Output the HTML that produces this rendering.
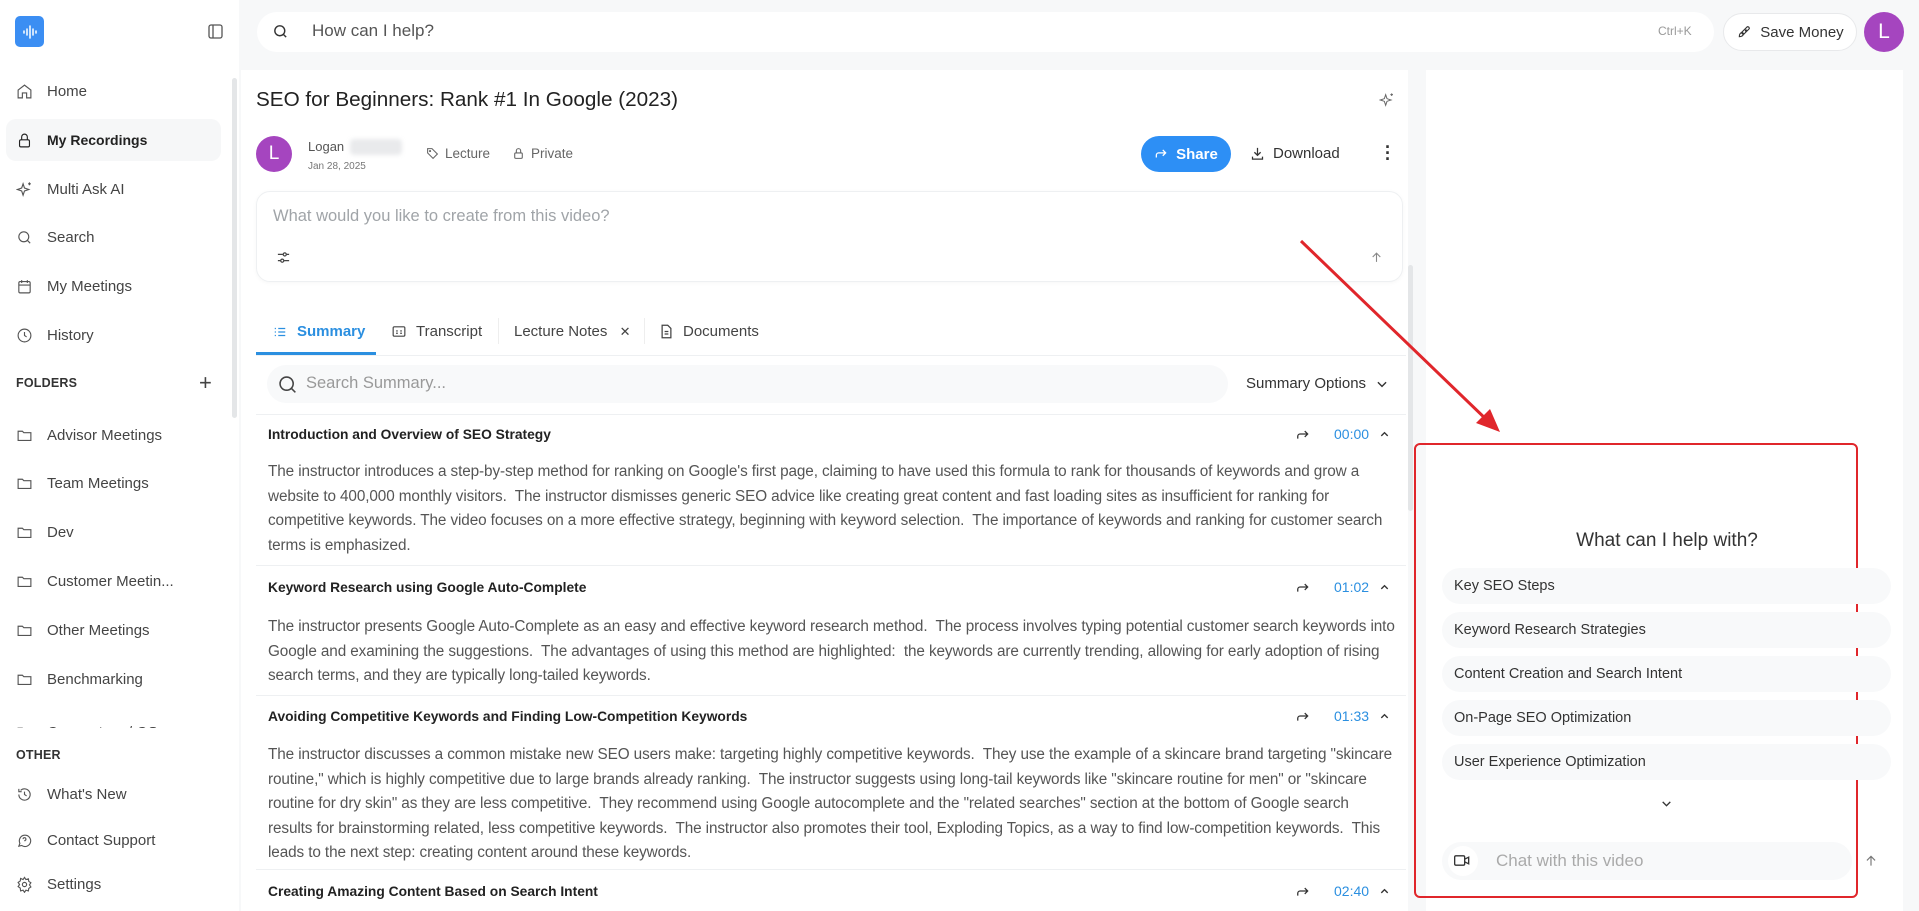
<!DOCTYPE html>
<html><head><meta charset="utf-8">
<style>
*{box-sizing:border-box;margin:0;padding:0}
body{width:1919px;height:911px;overflow:hidden;background:#f7f8f9;font-family:"Liberation Sans",sans-serif;color:#333;position:relative}
.abs{position:absolute}
svg{display:block}
.side{left:0;top:0;width:239px;height:911px;background:#fff}
.nav{position:absolute;left:16px;height:40px;display:flex;align-items:center;gap:14px;font-size:15px;color:#444;white-space:nowrap}
.nav svg{width:17px;height:17px;stroke:#555;fill:none;stroke-width:1.6}
.sec{position:absolute;left:16px;font-size:12.5px;font-weight:bold;color:#333;letter-spacing:.2px}
.main{left:241px;top:70px;width:1167px;height:841px;background:#fff}
.h{position:absolute;left:268px;font-size:13.8px;font-weight:bold;color:#222;white-space:nowrap}
.p{position:absolute;left:268px;font-size:15.3px;color:#555;line-height:24.5px;white-space:nowrap;letter-spacing:-.1px}
.sep{position:absolute;left:256px;width:1150px;height:1px;background:#eef0f2}
.ts{position:absolute;left:1296px;font-size:14px;color:#2b8fe0;display:flex;align-items:center}
.pill{position:absolute;left:1442px;width:449px;height:36px;background:#f8f9fa;border-radius:18px;font-size:14.5px;color:#333;padding-left:12px;display:flex;align-items:center}
</style></head><body>
<!-- sidebar -->
<div class="abs side">
  <div class="abs" style="left:15px;top:16px;width:29px;height:31px;background:#3b8ef3;border-radius:5px;display:flex;align-items:center;justify-content:center">
    <svg width="16" height="14" viewBox="0 0 16 14" stroke="#fff" stroke-width="1.5" stroke-linecap="round"><path d="M2 6v2M5 4v6M8 1v12M11 4v6M14 6v2"/></svg>
  </div>
  <svg class="abs" style="left:208px;top:24px" width="15" height="15" viewBox="0 0 15 15" fill="none" stroke="#555" stroke-width="1.3"><rect x="1" y="1" width="13" height="13" rx="2"/><path d="M5 1v13"/></svg>
  <div class="abs" style="left:6px;top:119px;width:215px;height:42px;background:#f6f7f8;border-radius:10px"></div>
  <div class="nav" style="top:71px"><svg viewBox="0 0 24 24"><path d="M3 10l9-7 9 7v11h-6v-7H9v7H3z"/></svg>Home</div>
  <div class="nav" style="top:120px;font-weight:bold;color:#222;font-size:14px"><svg viewBox="0 0 24 24" style="stroke:#222"><rect x="5" y="11" width="14" height="10" rx="2"/><path d="M8 11V7a4 4 0 0 1 8 0v4"/></svg>My Recordings</div>
  <div class="nav" style="top:169px"><svg viewBox="0 0 24 24"><path d="M10 4l2 6 6 2-6 2-2 6-2-6-6-2 6-2zM19 2v4M17 4h4"/></svg>Multi Ask AI</div>
  <div class="nav" style="top:217px"><svg viewBox="0 0 24 24"><circle cx="11" cy="11" r="7"/><path d="M20 20l-4-4"/></svg>Search</div>
  <div class="nav" style="top:266px"><svg viewBox="0 0 24 24"><rect x="4" y="5" width="16" height="16" rx="2"/><path d="M4 10h16M8 3v4M16 3v4"/></svg>My Meetings</div>
  <div class="nav" style="top:315px"><svg viewBox="0 0 24 24"><circle cx="12" cy="12" r="9"/><path d="M12 7v5l3 2"/></svg>History</div>
  <div class="sec" style="top:376px">FOLDERS</div>
  <div class="abs" style="left:199px;top:370px;font-size:22px;color:#444">+</div>
  <div class="nav" style="top:415px"><svg viewBox="0 0 24 24"><path d="M3 6h6l2 2h10v11H3z"/></svg>Advisor Meetings</div>
  <div class="nav" style="top:463px"><svg viewBox="0 0 24 24"><path d="M3 6h6l2 2h10v11H3z"/></svg>Team Meetings</div>
  <div class="nav" style="top:512px"><svg viewBox="0 0 24 24"><path d="M3 6h6l2 2h10v11H3z"/></svg>Dev</div>
  <div class="nav" style="top:561px"><svg viewBox="0 0 24 24"><path d="M3 6h6l2 2h10v11H3z"/></svg>Customer Meetin...</div>
  <div class="nav" style="top:610px"><svg viewBox="0 0 24 24"><path d="M3 6h6l2 2h10v11H3z"/></svg>Other Meetings</div>
  <div class="nav" style="top:659px"><svg viewBox="0 0 24 24"><path d="M3 6h6l2 2h10v11H3z"/></svg>Benchmarking</div>
  <div class="abs" style="left:0;top:718px;width:239px;height:10px;overflow:hidden"><div class="nav" style="top:-6px"><svg viewBox="0 0 24 24"><path d="M3 6h6l2 2h10v11H3z"/></svg>Connectors / OS</div></div>
  <div class="abs" style="left:232px;top:78px;width:5px;height:340px;background:#e4e6e8;border-radius:3px"></div>
  <div class="sec" style="top:748px">OTHER</div>
  <div class="nav" style="top:774px"><svg viewBox="0 0 24 24"><path d="M4 12a8 8 0 1 0 2.5-5.8M4 4v4h4M12 8v4l3 2"/></svg>What's New</div>
  <div class="nav" style="top:820px"><svg viewBox="0 0 24 24"><path d="M4 20l1.5-4A8 8 0 1 1 8 19z"/><path d="M10 10a2 2 0 1 1 2.5 2v1M12 16v.1"/></svg>Contact Support</div>
  <div class="nav" style="top:864px"><svg viewBox="0 0 24 24"><circle cx="12" cy="12" r="3"/><path d="M12 2l2 3 3.5-1 .5 3.5 3 2-2 3 2 3-3 2-.5 3.5-3.5-1-2 3-2-3-3.5 1L6 17l-3-2 2-3-2-3 3-2 .5-3.5L10 5z"/></svg>Settings</div>
</div>

<!-- top bar -->
<div class="abs" style="left:257px;top:12px;width:1457px;height:40px;background:#fff;border-radius:20px"></div>
<svg class="abs" style="left:272px;top:23px" width="17" height="17" viewBox="0 0 24 24" fill="none" stroke="#333" stroke-width="2"><circle cx="11" cy="11" r="7"/><path d="M20 20l-4-4"/></svg>
<div class="abs" style="left:312px;top:21px;font-size:17px;color:#555">How can I help?</div>
<div class="abs" style="left:1658px;top:24px;font-size:12px;color:#999">Ctrl+K</div>
<div class="abs" style="left:1723px;top:13px;width:134px;height:38px;background:#fff;border:1px solid #e8e9eb;border-radius:19px;display:flex;align-items:center;justify-content:center;gap:8px;font-size:15px;color:#333">
<svg width="16" height="16" viewBox="0 0 24 24" fill="none" stroke="#333" stroke-width="1.7"><path d="M5 19c0-3 1-5 3-6l3 3c-1 2-3 3-6 3zM9 12l8-8c2 0 3 1 3 3l-8 8zM15 9a1 1 0 1 0 .1 0"/></svg>Save Money</div>
<div class="abs" style="left:1864px;top:12px;width:40px;height:40px;border-radius:50%;background:#a545bf;color:#fff;font-size:21px;display:flex;align-items:center;justify-content:center">L</div>

<!-- main -->
<div class="abs main"></div>
<div class="abs" style="left:1410px;top:70px;width:5px;height:841px;background:#f7f8f9"></div>
<div class="abs" style="left:1408px;top:265px;width:5px;height:246px;background:#e4e6e8;border-radius:3px"></div>
<div class="abs" style="left:256px;top:88px;font-size:20.7px;color:#222">SEO for Beginners: Rank #1 In Google (2023)</div>
<svg class="abs" style="left:1379px;top:92px" width="16" height="16" viewBox="0 0 24 24" fill="none" stroke="#666" stroke-width="1.5"><path d="M10 4l2 6 6 2-6 2-2 6-2-6-6-2 6-2zM19 2v4M17 4h4"/></svg>
<div class="abs" style="left:256px;top:136px;width:36px;height:36px;border-radius:50%;background:#a545bf;color:#fff;font-size:19px;display:flex;align-items:center;justify-content:center">L</div>
<div class="abs" style="left:308px;top:139px;font-size:13px;color:#555">Logan</div>
<div class="abs" style="left:350px;top:139px;width:52px;height:16px;background:#e9eaec;border-radius:4px;filter:blur(2px)"></div>
<div class="abs" style="left:308px;top:161px;font-size:10px;color:#777">Jan 28, 2025</div>
<div class="abs" style="left:426px;top:146px;font-size:13.5px;color:#666;display:flex;gap:6px;align-items:center"><svg width="13" height="13" viewBox="0 0 24 24" fill="none" stroke="#666" stroke-width="2"><path d="M3 3h8l10 10-8 8L3 11z"/><circle cx="7.5" cy="7.5" r="1"/></svg>Lecture</div>
<div class="abs" style="left:512px;top:146px;font-size:13.5px;color:#666;display:flex;gap:6px;align-items:center"><svg width="13" height="13" viewBox="0 0 24 24" fill="none" stroke="#666" stroke-width="2"><rect x="5" y="11" width="14" height="10" rx="2"/><path d="M8 11V7a4 4 0 0 1 8 0v4"/></svg>Private</div>
<div class="abs" style="left:1141px;top:136px;width:90px;height:36px;background:#2d8ff5;border-radius:18px;color:#fff;font-size:15px;font-weight:bold;display:flex;align-items:center;justify-content:center;gap:8px"><svg width="14" height="14" viewBox="0 0 24 24" fill="none" stroke="#fff" stroke-width="2.2"><path d="M4 18v-4a4 4 0 0 1 4-4h12M15 5l5 5-5 5"/></svg>Share</div>
<div class="abs" style="left:1250px;top:145px;font-size:15px;color:#333;display:flex;align-items:center;gap:8px"><svg width="15" height="15" viewBox="0 0 24 24" fill="none" stroke="#333" stroke-width="2"><path d="M12 3v12M7 10l5 5 5-5M4 17v4h16v-4"/></svg>Download</div>
<div class="abs" style="left:1385px;top:144px;width:4px;font-size:18px;color:#333;line-height:6px;text-align:center;font-weight:bold">·<br>·<br>·</div>
<div class="abs" style="left:256px;top:191px;width:1147px;height:91px;border:1px solid #eef0f2;border-radius:14px;box-shadow:0 1px 4px rgba(0,0,0,.04)"></div>
<div class="abs" style="left:273px;top:207px;font-size:16.5px;color:#a0a4a8">What would you like to create from this video?</div>
<svg class="abs" style="left:276px;top:250px" width="15" height="15" viewBox="0 0 24 24" fill="none" stroke="#444" stroke-width="2"><path d="M3 7h8M17 7h4M3 17h4M13 17h8"/><circle cx="14" cy="7" r="2.5"/><circle cx="10" cy="17" r="2.5"/></svg>
<svg class="abs" style="left:1370px;top:251px" width="13" height="13" viewBox="0 0 24 24" fill="none" stroke="#888" stroke-width="2"><path d="M12 20V4M5 11l7-7 7 7"/></svg>

<!-- tabs -->
<div class="abs" style="left:273px;top:323px;font-size:15px;color:#2b8fe0;font-weight:bold;display:flex;gap:10px;align-items:center"><svg width="14" height="14" viewBox="0 0 24 24" fill="none" stroke="#2b8fe0" stroke-width="2"><path d="M9 6h12M9 12h12M9 18h12M3 6h2M3 12h2M3 18h2"/></svg>Summary</div>
<div class="abs" style="left:256px;top:352px;width:120px;height:3px;background:#2b8fe0"></div>
<div class="abs" style="left:256px;top:355px;width:1150px;height:1px;background:#eef0f2"></div>
<div class="abs" style="left:392px;top:323px;font-size:15px;color:#444;display:flex;gap:10px;align-items:center"><svg width="14" height="13" viewBox="0 0 24 22" fill="none" stroke="#444" stroke-width="2"><rect x="2" y="3" width="20" height="16" rx="2"/><path d="M7 10h3M14 10h3M7 14h3M14 14h3"/></svg>Transcript</div>
<div class="abs" style="left:498px;top:318px;width:1px;height:26px;background:#eee"></div>
<div class="abs" style="left:514px;top:323px;font-size:15px;color:#444">Lecture Notes <span style="font-size:13px;margin-left:8px">✕</span></div>
<div class="abs" style="left:644px;top:318px;width:1px;height:26px;background:#eee"></div>
<div class="abs" style="left:660px;top:323px;font-size:15px;color:#444;display:flex;gap:10px;align-items:center"><svg width="13" height="15" viewBox="0 0 20 24" fill="none" stroke="#444" stroke-width="2"><path d="M3 2h9l5 5v15H3zM7 12h6M7 16h6"/></svg>Documents</div>
<div class="abs" style="left:267px;top:365px;width:961px;height:38px;background:#f8f9fa;border-radius:19px"></div>
<svg class="abs" style="left:277px;top:374px" width="21" height="21" viewBox="0 0 24 24" fill="none" stroke="#444" stroke-width="1.8"><circle cx="11" cy="11" r="7.5"/><path d="M21 21l-4.5-4.5"/></svg>
<div class="abs" style="left:306px;top:374px;font-size:16.5px;color:#999">Search Summary...</div>
<div class="abs" style="left:1246px;top:375px;font-size:15px;color:#333">Summary Options</div>
<svg class="abs" style="left:1375px;top:377px" width="14" height="14" viewBox="0 0 24 24" fill="none" stroke="#333" stroke-width="2.4"><path d="M5 9l7 7 7-7"/></svg>
<div class="sep" style="top:414px"></div>

<!-- sections -->
<div class="h" style="top:427px">Introduction and Overview of SEO Strategy</div>
<div class="ts" style="top:426px"><svg width="14" height="12" viewBox="0 0 24 20" fill="none" stroke="#333" stroke-width="2.2"><path d="M3 18v-4a4 4 0 0 1 4-4h13M15 5l5 5-5 5"/></svg><span style="margin-left:24px">00:00</span><svg style="margin-left:10px" width="11" height="11" viewBox="0 0 24 24" fill="none" stroke="#333" stroke-width="3"><path d="M5 15l7-7 7 7"/></svg></div>
<div class="p" style="top:460px">The instructor introduces a step-by-step method for ranking on Google's first page, claiming to have used this formula to rank for thousands of keywords and grow a<br>website to 400,000 monthly visitors.&nbsp; The instructor dismisses generic SEO advice like creating great content and fast loading sites as insufficient for ranking for<br>competitive keywords. The video focuses on a more effective strategy, beginning with keyword selection.&nbsp; The importance of keywords and ranking for customer search<br>terms is emphasized.</div>
<div class="sep" style="top:565px"></div>
<div class="h" style="top:580px">Keyword Research using Google Auto-Complete</div>
<div class="ts" style="top:579px"><svg width="14" height="12" viewBox="0 0 24 20" fill="none" stroke="#333" stroke-width="2.2"><path d="M3 18v-4a4 4 0 0 1 4-4h13M15 5l5 5-5 5"/></svg><span style="margin-left:24px">01:02</span><svg style="margin-left:10px" width="11" height="11" viewBox="0 0 24 24" fill="none" stroke="#333" stroke-width="3"><path d="M5 15l7-7 7 7"/></svg></div>
<div class="p" style="top:615px">The instructor presents Google Auto-Complete as an easy and effective keyword research method.&nbsp; The process involves typing potential customer search keywords into<br>Google and examining the suggestions.&nbsp; The advantages of using this method are highlighted:&nbsp; the keywords are currently trending, allowing for early adoption of rising<br>search terms, and they are typically long-tailed keywords.</div>
<div class="sep" style="top:695px"></div>
<div class="h" style="top:709px">Avoiding Competitive Keywords and Finding Low-Competition Keywords</div>
<div class="ts" style="top:708px"><svg width="14" height="12" viewBox="0 0 24 20" fill="none" stroke="#333" stroke-width="2.2"><path d="M3 18v-4a4 4 0 0 1 4-4h13M15 5l5 5-5 5"/></svg><span style="margin-left:24px">01:33</span><svg style="margin-left:10px" width="11" height="11" viewBox="0 0 24 24" fill="none" stroke="#333" stroke-width="3"><path d="M5 15l7-7 7 7"/></svg></div>
<div class="p" style="top:743px">The instructor discusses a common mistake new SEO users make: targeting highly competitive keywords.&nbsp; They use the example of a skincare brand targeting "skincare<br>routine," which is highly competitive due to large brands already ranking.&nbsp; The instructor suggests using long-tail keywords like "skincare routine for men" or "skincare<br>routine for dry skin" as they are less competitive.&nbsp; They recommend using Google autocomplete and the "related searches" section at the bottom of Google search<br>results for brainstorming related, less competitive keywords.&nbsp; The instructor also promotes their tool, Exploding Topics, as a way to find low-competition keywords.&nbsp; This<br>leads to the next step: creating content around these keywords.</div>
<div class="sep" style="top:869px"></div>
<div class="h" style="top:884px">Creating Amazing Content Based on Search Intent</div>
<div class="ts" style="top:883px"><svg width="14" height="12" viewBox="0 0 24 20" fill="none" stroke="#333" stroke-width="2.2"><path d="M3 18v-4a4 4 0 0 1 4-4h13M15 5l5 5-5 5"/></svg><span style="margin-left:24px">02:40</span><svg style="margin-left:10px" width="11" height="11" viewBox="0 0 24 24" fill="none" stroke="#333" stroke-width="3"><path d="M5 15l7-7 7 7"/></svg></div>

<!-- right panel -->
<div class="abs" style="left:1426px;top:70px;width:477px;height:841px;background:#fff"></div>
<div class="abs" style="left:1414px;top:443px;width:444px;height:455px;border:2px solid #e0262b;border-radius:6px"></div>
<div class="abs" style="left:1414px;top:530px;width:506px;text-align:center;font-size:19px;color:#333">What can I help with?</div>
<div class="pill" style="top:568px">Key SEO Steps</div>
<div class="pill" style="top:612px">Keyword Research Strategies</div>
<div class="pill" style="top:656px">Content Creation and Search Intent</div>
<div class="pill" style="top:700px">On-Page SEO Optimization</div>
<div class="pill" style="top:744px">User Experience Optimization</div>
<svg class="abs" style="left:1660px;top:797px" width="13" height="13" viewBox="0 0 24 24" fill="none" stroke="#333" stroke-width="2.4"><path d="M5 9l7 7 7-7"/></svg>
<div class="abs" style="left:1442px;top:842px;width:410px;height:38px;background:#f8f9fa;border-radius:19px"></div>
<div class="abs" style="left:1448px;top:846px;width:30px;height:30px;background:#fff;border-radius:50%"></div>
<svg class="abs" style="left:1454px;top:854px" width="16" height="13" viewBox="0 0 24 18" fill="none" stroke="#333" stroke-width="2"><rect x="1" y="2" width="15" height="14" rx="2"/><path d="M16 7l6-3v10l-6-3"/></svg>
<div class="abs" style="left:1496px;top:851px;font-size:17px;color:#aaa">Chat with this video</div>
<svg class="abs" style="left:1864px;top:854px" width="14" height="14" viewBox="0 0 24 24" fill="none" stroke="#777" stroke-width="2"><path d="M12 20V4M5 11l7-7 7 7"/></svg>

<!-- red arrow -->
<svg class="abs" style="left:0;top:0" width="1919" height="911"><line x1="1301" y1="241" x2="1490" y2="423" stroke="#e0262b" stroke-width="3"/><path d="M1500 432 L1476 423 L1490 409 Z" fill="#e0262b"/></svg>
</body></html>
